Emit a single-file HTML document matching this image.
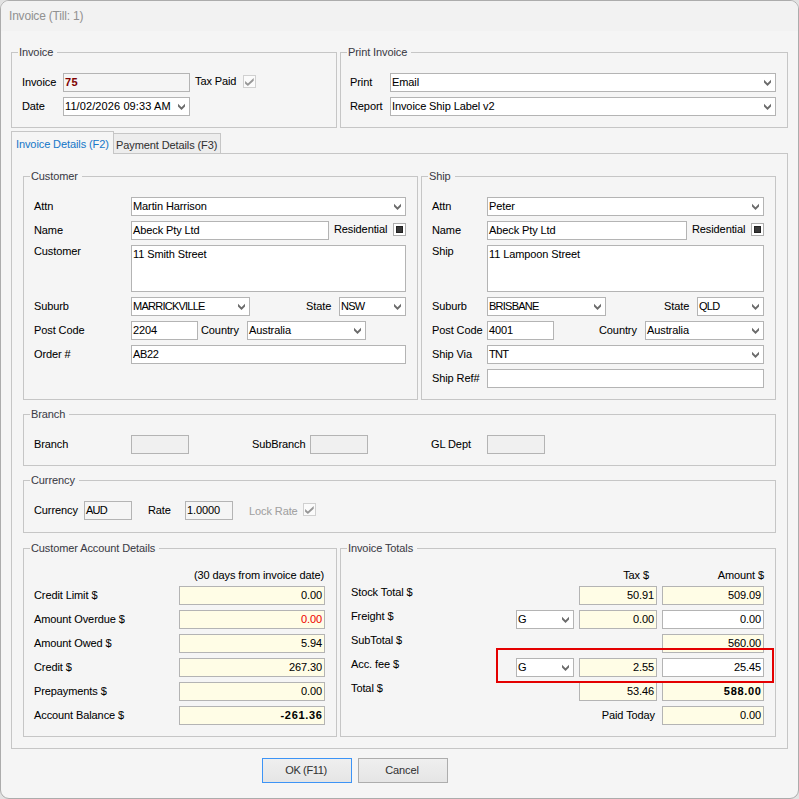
<!DOCTYPE html>
<html><head><meta charset="utf-8"><style>
*{margin:0;padding:0;box-sizing:border-box}
html,body{width:799px;height:799px;overflow:hidden;background:#e2e2e2;position:relative}
body>div,body>svg{position:absolute}
.t{font-family:"Liberation Sans",sans-serif;font-size:11px;letter-spacing:-0.1px;line-height:13px;white-space:nowrap;color:#000;-webkit-text-stroke:0.05px}
#win{left:0;top:0;width:799px;height:799px;border:1px solid #acacac;border-radius:9px;background:#f5f5f5}
#titlebar{left:1px;top:1px;width:797px;height:30px;background:#f2f2f2;border-radius:8px 8px 0 0}
.g{border:1px solid #c6c6c6}
.i{border:1px solid #b4b4b4}
.chev{width:8px;height:8px;line-height:0}
.ck{border:1px solid #adadad;background:#fff}
.ckd{border-color:#d0d0d0;background:#fbfbfb}
.ckf{background:#383838;border:1px solid #222}
.tick{position:absolute}
.tabc{border:1px solid #c6c6c6}
.tab1{border:1px solid #c6c6c6;border-bottom:none;background:#f5f5f5}
.tab2{border:1px solid #c6c6c6;background:#ededed}
#red{border:2px solid #e40000}
.btn{border:1px solid #adadad;background:linear-gradient(#efefef,#e5e5e5)}
</style></head>
<body>
<div id="win"></div>
<div id="titlebar"></div>
<div class="t" style="top:10px;left:9px;color:#929292;font-size:12px;letter-spacing:-0.2px;">Invoice (Till: 1)</div>
<div class="g" style="left:11px;top:52px;width:326px;height:76px;"></div>
<div class="t" style="top:46px;left:19px;color:#3c3c46;background:#f5f5f5;padding:0 4px 0 1px;margin-left:-1px;">Invoice</div>
<div class="t" style="top:76px;left:22px;">Invoice</div>
<div class="i" style="left:63px;top:73px;width:127px;height:19px;background:#f5f5f5;"></div>
<div class="t" style="top:76px;letter-spacing:0.5px;left:65px;color:#800000;font-weight:bold;">75</div>
<div class="t" style="top:75px;left:195px;">Tax Paid</div>
<div class="ck ckd" style="left:243px;top:75px;width:13px;height:13px;"></div>
<svg class="tick" style="left:243px;top:75px" width="13" height="13" viewBox="0 0 13 13"><polygon points="2.1,6.0 4.9,8.5 10.7,2.9 10.7,5.7 4.9,11.0 2.1,8.7" fill="#979797"/></svg>
<div class="t" style="top:100px;left:22px;">Date</div>
<div class="i" style="left:63px;top:97px;width:127px;height:19px;background:#fff;"></div>
<div class="chev" style="left:178px;top:103px;"><svg width="8" height="8" viewBox="0 0 8 8"><polygon points="0,0.8 3.5,4.3 7,0.8 7,3.4 3.5,6.9 0,3.4" fill="#6b6b6b"/></svg></div>
<div class="t" style="top:100px;letter-spacing:0.1px;left:65px;">11/02/2026 09:33 AM</div>
<div class="g" style="left:340px;top:52px;width:448px;height:76px;"></div>
<div class="t" style="top:46px;left:348px;color:#3c3c46;background:#f5f5f5;padding:0 4px 0 1px;margin-left:-1px;">Print Invoice</div>
<div class="t" style="top:76px;left:350px;">Print</div>
<div class="i" style="left:390px;top:73px;width:386px;height:19px;background:#fff;"></div>
<div class="t" style="top:76px;left:392px;">Email</div>
<div class="chev" style="left:764px;top:79px;"><svg width="8" height="8" viewBox="0 0 8 8"><polygon points="0,0.8 3.5,4.3 7,0.8 7,3.4 3.5,6.9 0,3.4" fill="#6b6b6b"/></svg></div>
<div class="t" style="top:100px;left:350px;">Report</div>
<div class="i" style="left:390px;top:97px;width:386px;height:19px;background:#fff;"></div>
<div class="t" style="top:100px;left:392px;">Invoice Ship Label v2</div>
<div class="chev" style="left:764px;top:103px;"><svg width="8" height="8" viewBox="0 0 8 8"><polygon points="0,0.8 3.5,4.3 7,0.8 7,3.4 3.5,6.9 0,3.4" fill="#6b6b6b"/></svg></div>
<div class="tabc" style="left:11px;top:153px;width:777px;height:596px;"></div>
<div class="tab2" style="left:113px;top:133px;width:108px;height:21px;"></div>
<div class="tab1" style="left:11px;top:131px;width:103px;height:23px;"></div>
<div class="t" style="top:138px;left:16px;color:#1979ca;">Invoice Details (F2)</div>
<div class="t" style="top:139px;left:116px;color:#333;">Payment Details (F3)</div>
<div class="g" style="left:23px;top:176px;width:395px;height:224px;"></div>
<div class="t" style="top:170px;left:31px;color:#3c3c46;background:#f5f5f5;padding:0 4px 0 1px;margin-left:-1px;">Customer</div>
<div class="t" style="top:200px;left:34px;">Attn</div>
<div class="i" style="left:131px;top:197px;width:275px;height:19px;background:#fff;"></div>
<div class="t" style="top:200px;left:133px;">Martin Harrison</div>
<div class="chev" style="left:394px;top:203px;"><svg width="8" height="8" viewBox="0 0 8 8"><polygon points="0,0.8 3.5,4.3 7,0.8 7,3.4 3.5,6.9 0,3.4" fill="#6b6b6b"/></svg></div>
<div class="t" style="top:224px;left:34px;">Name</div>
<div class="i" style="left:131px;top:221px;width:198px;height:19px;background:#fff;"></div>
<div class="t" style="top:224px;left:133px;">Abeck Pty Ltd</div>
<div class="t" style="top:223px;left:334px;">Residential</div>
<div class="ck" style="left:393px;top:223px;width:13px;height:13px;"></div>
<div class="ckf" style="left:396px;top:226px;width:7px;height:7px;"></div>
<div class="t" style="top:245px;left:34px;">Customer</div>
<div class="i" style="left:131px;top:245px;width:275px;height:47px;background:#fff;"></div>
<div class="t" style="top:248px;left:133px;">11 Smith Street</div>
<div class="t" style="top:300px;left:34px;">Suburb</div>
<div class="i" style="left:131px;top:297px;width:119px;height:19px;background:#fff;"></div>
<div class="t" style="top:300px;letter-spacing:-0.75px;left:133px;">MARRICKVILLE</div>
<div class="chev" style="left:238px;top:303px;"><svg width="8" height="8" viewBox="0 0 8 8"><polygon points="0,0.8 3.5,4.3 7,0.8 7,3.4 3.5,6.9 0,3.4" fill="#6b6b6b"/></svg></div>
<div class="t" style="top:300px;left:306px;">State</div>
<div class="i" style="left:339px;top:297px;width:67px;height:19px;background:#fff;"></div>
<div class="t" style="top:300px;letter-spacing:-0.75px;left:341px;">NSW</div>
<div class="chev" style="left:394px;top:303px;"><svg width="8" height="8" viewBox="0 0 8 8"><polygon points="0,0.8 3.5,4.3 7,0.8 7,3.4 3.5,6.9 0,3.4" fill="#6b6b6b"/></svg></div>
<div class="t" style="top:324px;left:34px;">Post Code</div>
<div class="i" style="left:131px;top:321px;width:67px;height:19px;background:#fff;"></div>
<div class="t" style="top:324px;left:133px;">2204</div>
<div class="t" style="top:324px;left:201px;">Country</div>
<div class="i" style="left:247px;top:321px;width:119px;height:19px;background:#fff;"></div>
<div class="t" style="top:324px;left:249px;">Australia</div>
<div class="chev" style="left:354px;top:327px;"><svg width="8" height="8" viewBox="0 0 8 8"><polygon points="0,0.8 3.5,4.3 7,0.8 7,3.4 3.5,6.9 0,3.4" fill="#6b6b6b"/></svg></div>
<div class="t" style="top:348px;left:34px;">Order #</div>
<div class="i" style="left:131px;top:345px;width:275px;height:19px;background:#fff;"></div>
<div class="t" style="top:348px;letter-spacing:-0.35px;left:133px;">AB22</div>
<div class="g" style="left:421px;top:176px;width:355px;height:224px;"></div>
<div class="t" style="top:170px;left:429px;color:#3c3c46;background:#f5f5f5;padding:0 4px 0 1px;margin-left:-1px;">Ship</div>
<div class="t" style="top:200px;left:432px;">Attn</div>
<div class="i" style="left:487px;top:197px;width:277px;height:19px;background:#fff;"></div>
<div class="t" style="top:200px;left:489px;">Peter</div>
<div class="chev" style="left:752px;top:203px;"><svg width="8" height="8" viewBox="0 0 8 8"><polygon points="0,0.8 3.5,4.3 7,0.8 7,3.4 3.5,6.9 0,3.4" fill="#6b6b6b"/></svg></div>
<div class="t" style="top:224px;left:432px;">Name</div>
<div class="i" style="left:487px;top:221px;width:200px;height:19px;background:#fff;"></div>
<div class="t" style="top:224px;left:489px;">Abeck Pty Ltd</div>
<div class="t" style="top:223px;left:692px;">Residential</div>
<div class="ck" style="left:751px;top:223px;width:13px;height:13px;"></div>
<div class="ckf" style="left:754px;top:226px;width:7px;height:7px;"></div>
<div class="t" style="top:245px;left:432px;">Ship</div>
<div class="i" style="left:487px;top:245px;width:277px;height:47px;background:#fff;"></div>
<div class="t" style="top:248px;left:489px;">11 Lampoon Street</div>
<div class="t" style="top:300px;left:432px;">Suburb</div>
<div class="i" style="left:487px;top:297px;width:119px;height:19px;background:#fff;"></div>
<div class="t" style="top:300px;letter-spacing:-0.75px;left:489px;">BRISBANE</div>
<div class="chev" style="left:594px;top:303px;"><svg width="8" height="8" viewBox="0 0 8 8"><polygon points="0,0.8 3.5,4.3 7,0.8 7,3.4 3.5,6.9 0,3.4" fill="#6b6b6b"/></svg></div>
<div class="t" style="top:300px;left:664px;">State</div>
<div class="i" style="left:697px;top:297px;width:67px;height:19px;background:#fff;"></div>
<div class="t" style="top:300px;letter-spacing:-0.75px;left:699px;">QLD</div>
<div class="chev" style="left:752px;top:303px;"><svg width="8" height="8" viewBox="0 0 8 8"><polygon points="0,0.8 3.5,4.3 7,0.8 7,3.4 3.5,6.9 0,3.4" fill="#6b6b6b"/></svg></div>
<div class="t" style="top:324px;left:432px;">Post Code</div>
<div class="i" style="left:487px;top:321px;width:67px;height:19px;background:#fff;"></div>
<div class="t" style="top:324px;left:489px;">4001</div>
<div class="t" style="top:324px;left:599px;">Country</div>
<div class="i" style="left:645px;top:321px;width:119px;height:19px;background:#fff;"></div>
<div class="t" style="top:324px;left:647px;">Australia</div>
<div class="chev" style="left:752px;top:327px;"><svg width="8" height="8" viewBox="0 0 8 8"><polygon points="0,0.8 3.5,4.3 7,0.8 7,3.4 3.5,6.9 0,3.4" fill="#6b6b6b"/></svg></div>
<div class="t" style="top:348px;left:432px;">Ship Via</div>
<div class="i" style="left:487px;top:345px;width:277px;height:19px;background:#fff;"></div>
<div class="t" style="top:348px;letter-spacing:-0.75px;left:489px;">TNT</div>
<div class="chev" style="left:752px;top:351px;"><svg width="8" height="8" viewBox="0 0 8 8"><polygon points="0,0.8 3.5,4.3 7,0.8 7,3.4 3.5,6.9 0,3.4" fill="#6b6b6b"/></svg></div>
<div class="t" style="top:372px;left:432px;">Ship Ref#</div>
<div class="i" style="left:487px;top:369px;width:277px;height:19px;background:#fff;"></div>
<div class="g" style="left:23px;top:414px;width:753px;height:52px;"></div>
<div class="t" style="top:408px;left:31px;color:#3c3c46;background:#f5f5f5;padding:0 4px 0 1px;margin-left:-1px;">Branch</div>
<div class="t" style="top:438px;left:34px;">Branch</div>
<div class="i" style="left:131px;top:435px;width:58px;height:19px;background:#f0f0f0;"></div>
<div class="t" style="top:438px;left:252px;">SubBranch</div>
<div class="i" style="left:310px;top:435px;width:58px;height:19px;background:#f0f0f0;"></div>
<div class="t" style="top:438px;left:431px;">GL Dept</div>
<div class="i" style="left:487px;top:435px;width:58px;height:19px;background:#f0f0f0;"></div>
<div class="g" style="left:23px;top:480px;width:753px;height:53px;"></div>
<div class="t" style="top:474px;left:31px;color:#3c3c46;background:#f5f5f5;padding:0 4px 0 1px;margin-left:-1px;">Currency</div>
<div class="t" style="top:504px;left:34px;">Currency</div>
<div class="i" style="left:84px;top:501px;width:48px;height:19px;background:#f5f5f5;"></div>
<div class="t" style="top:504px;letter-spacing:-0.75px;left:86px;">AUD</div>
<div class="t" style="top:504px;left:148px;">Rate</div>
<div class="i" style="left:185px;top:501px;width:48px;height:19px;background:#f5f5f5;"></div>
<div class="t" style="top:504px;left:187px;">1.0000</div>
<div class="t" style="top:505px;left:249px;color:#a0a0a0;">Lock Rate</div>
<div class="ck ckd" style="left:303px;top:503px;width:13px;height:13px;"></div>
<svg class="tick" style="left:303px;top:503px" width="13" height="13" viewBox="0 0 13 13"><polygon points="2.1,6.0 4.9,8.5 10.7,2.9 10.7,5.7 4.9,11.0 2.1,8.7" fill="#979797"/></svg>
<div class="g" style="left:23px;top:548px;width:314px;height:189px;"></div>
<div class="t" style="top:542px;left:31px;color:#3c3c46;background:#f5f5f5;padding:0 4px 0 1px;margin-left:-1px;">Customer Account Details</div>
<div class="t" style="top:569px;right:475px;">(30 days from invoice date)</div>
<div class="t" style="top:589px;left:34px;">Credit Limit $</div>
<div class="i" style="left:179px;top:586px;width:146px;height:19px;background:#fffde6;"></div>
<div class="t" style="top:589px;right:477px;">0.00</div>
<div class="t" style="top:613px;left:34px;">Amount Overdue $</div>
<div class="i" style="left:179px;top:610px;width:146px;height:19px;background:#fffde6;"></div>
<div class="t" style="top:613px;right:477px;color:#f00000;">0.00</div>
<div class="t" style="top:637px;left:34px;">Amount Owed $</div>
<div class="i" style="left:179px;top:634px;width:146px;height:19px;background:#fffde6;"></div>
<div class="t" style="top:637px;right:477px;">5.94</div>
<div class="t" style="top:661px;left:34px;">Credit $</div>
<div class="i" style="left:179px;top:658px;width:146px;height:19px;background:#fffde6;"></div>
<div class="t" style="top:661px;right:477px;">267.30</div>
<div class="t" style="top:685px;left:34px;">Prepayments $</div>
<div class="i" style="left:179px;top:682px;width:146px;height:19px;background:#fffde6;"></div>
<div class="t" style="top:685px;right:477px;">0.00</div>
<div class="t" style="top:709px;left:34px;">Account Balance $</div>
<div class="i" style="left:179px;top:706px;width:146px;height:19px;background:#fffde6;"></div>
<div class="t" style="top:709px;letter-spacing:0.7px;right:476.3px;font-weight:bold;">-261.36</div>
<div class="g" style="left:340px;top:548px;width:436px;height:189px;"></div>
<div class="t" style="top:542px;left:348px;color:#3c3c46;background:#f5f5f5;padding:0 4px 0 1px;margin-left:-1px;">Invoice Totals</div>
<div class="t" style="top:569px;right:150px;">Tax $</div>
<div class="t" style="top:569px;right:35px;">Amount $</div>
<div class="t" style="top:586px;left:351px;">Stock Total $</div>
<div class="i" style="left:579px;top:586px;width:78px;height:19px;background:#fffde6;"></div>
<div class="t" style="top:589px;right:145px;">50.91</div>
<div class="i" style="left:662px;top:586px;width:102px;height:19px;background:#fffde6;"></div>
<div class="t" style="top:589px;right:38px;">509.09</div>
<div class="t" style="top:610px;left:351px;">Freight $</div>
<div class="i" style="left:516px;top:610px;width:58px;height:19px;background:#fff;"></div>
<div class="t" style="top:613px;left:518px;">G</div>
<div class="chev" style="left:562px;top:616px;"><svg width="8" height="8" viewBox="0 0 8 8"><polygon points="0,0.8 3.5,4.3 7,0.8 7,3.4 3.5,6.9 0,3.4" fill="#6b6b6b"/></svg></div>
<div class="i" style="left:579px;top:610px;width:78px;height:19px;background:#fffde6;"></div>
<div class="t" style="top:613px;right:145px;">0.00</div>
<div class="i" style="left:662px;top:610px;width:102px;height:19px;background:#fff;"></div>
<div class="t" style="top:613px;right:38px;">0.00</div>
<div class="t" style="top:634px;left:351px;">SubTotal $</div>
<div class="i" style="left:662px;top:634px;width:102px;height:19px;background:#fffde6;"></div>
<div class="t" style="top:637px;right:38px;">560.00</div>
<div class="t" style="top:658px;left:351px;">Acc. fee $</div>
<div class="i" style="left:516px;top:658px;width:58px;height:19px;background:#fff;"></div>
<div class="t" style="top:661px;left:518px;">G</div>
<div class="chev" style="left:562px;top:664px;"><svg width="8" height="8" viewBox="0 0 8 8"><polygon points="0,0.8 3.5,4.3 7,0.8 7,3.4 3.5,6.9 0,3.4" fill="#6b6b6b"/></svg></div>
<div class="i" style="left:579px;top:658px;width:78px;height:19px;background:#fffde6;"></div>
<div class="t" style="top:661px;right:145px;">2.55</div>
<div class="i" style="left:662px;top:658px;width:102px;height:19px;background:#fff;"></div>
<div class="t" style="top:661px;right:38px;">25.45</div>
<div class="t" style="top:682px;left:351px;">Total $</div>
<div class="i" style="left:579px;top:682px;width:78px;height:19px;background:#fffde6;"></div>
<div class="t" style="top:685px;right:145px;">53.46</div>
<div class="i" style="left:662px;top:682px;width:102px;height:19px;background:#fffde6;"></div>
<div class="t" style="top:685px;letter-spacing:0.7px;right:37.3px;font-weight:bold;">588.00</div>
<div class="t" style="top:709px;right:144px;">Paid Today</div>
<div class="i" style="left:662px;top:706px;width:102px;height:19px;background:#fffde6;"></div>
<div class="t" style="top:709px;right:38px;">0.00</div>
<div id="red" style="left:496px;top:648px;width:278px;height:35px;"></div>
<div class="btn" style="left:262px;top:758px;width:90px;height:25px;border-color:#3d94f6;"></div>
<div class="t" style="top:764px;letter-spacing:-0.35px;left:306px;color:#333;transform:translateX(-50%);">OK (F11)</div>
<div class="btn" style="left:358px;top:758px;width:90px;height:25px;"></div>
<div class="t" style="top:764px;left:402px;color:#333;transform:translateX(-50%);">Cancel</div>
</body></html>
